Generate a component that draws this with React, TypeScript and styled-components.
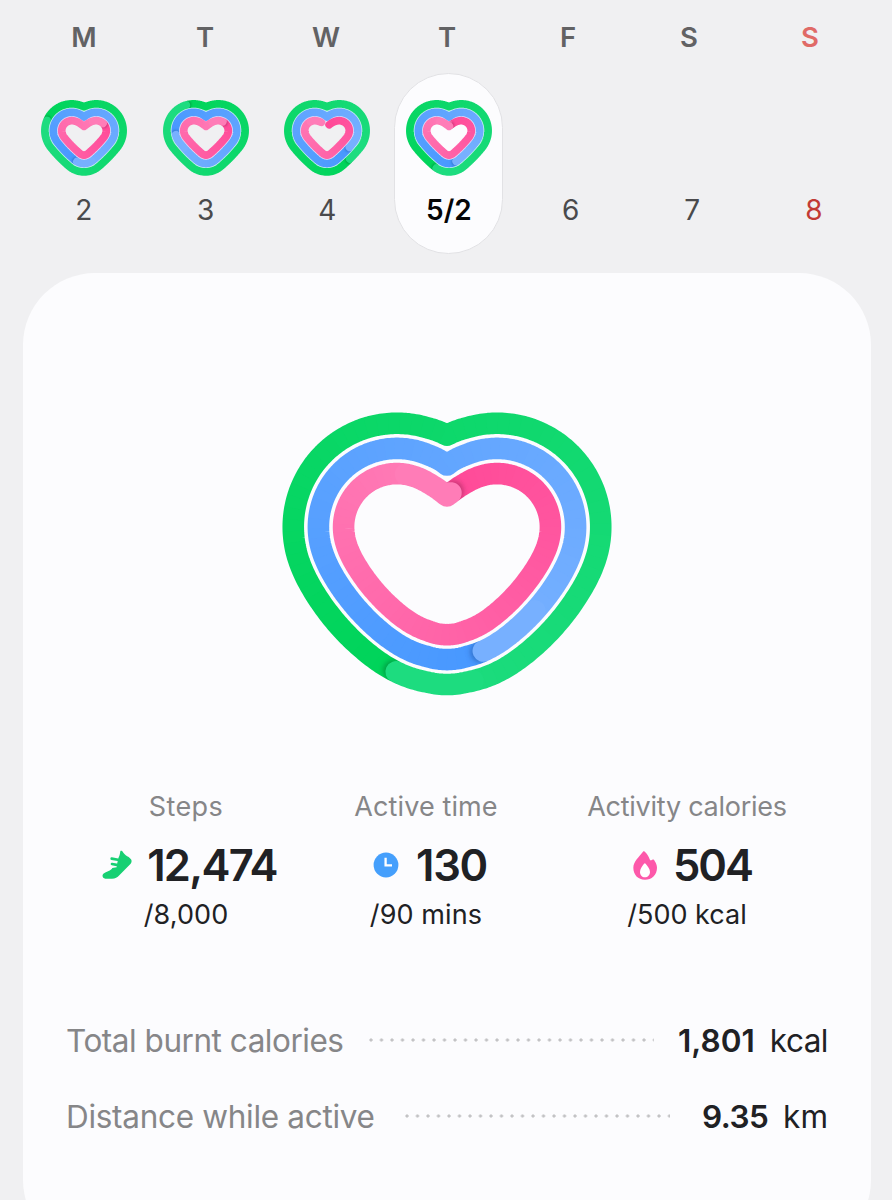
import React, { useId } from "react";
import styled, { createGlobalStyle } from "styled-components";

const GlobalStyle = createGlobalStyle`
  * { box-sizing: border-box; }
  body { margin: 0; background: #f0f0f2; }
`;

/* ---------- heart rings ---------- */

type Pt = [number, number];

interface Shape {
  width: number;
  height: number;
  cx: number;
  cy: number;
  dx: number;
  bottom: number;
  bottomExtra: number;
  sideExtra: number;
  stroke: number;
  notch: number;
  soften: number;
  radii: [number, number, number];
}

const LARGE: Shape = {
  width: 336, height: 290, cx: 168, cy: 118, dx: 50, bottom: 42.5,
  bottomExtra: 10.5, sideExtra: 135, stroke: 21.6, notch: -31, soften: 20,
  radii: [104.5, 79.6, 54.7],
};

const SMALL: Shape = {
  width: 90, height: 80, cx: 45, cy: 32.7, dx: 12.3, bottom: 18.6,
  bottomExtra: -4.2, sideExtra: 110, stroke: 7.7, notch: -4.3, soften: 2,
  radii: [26.85, 18.45, 10.05],
};

function arc(c: Pt, r: number, from: number, to: number, n: number): Pt[] {
  return Array.from({ length: n + 1 }, (_, i) => {
    const a = from + ((to - from) * i) / n;
    return [c[0] + r * Math.cos(a), c[1] + r * Math.sin(a)] as Pt;
  });
}

/* Evenly spaced points along a line. */
function spread(pts: Pt[], n: number): Pt[] {
  const len = [0];
  for (let i = 1; i < pts.length; i++) {
    len.push(len[i - 1] + Math.hypot(pts[i][0] - pts[i - 1][0], pts[i][1] - pts[i - 1][1]));
  }
  const total = len[len.length - 1];
  const out: Pt[] = [];
  let j = 1;
  for (let i = 0; i < n; i++) {
    const t = (total * i) / n;
    while (len[j] < t) j++;
    const f = (t - len[j - 1]) / (len[j] - len[j - 1] || 1);
    out.push([
      pts[j - 1][0] + (pts[j][0] - pts[j - 1][0]) * f,
      pts[j - 1][1] + (pts[j][1] - pts[j - 1][1]) * f,
    ]);
  }
  return out;
}

/* Averages neighbouring points so that curvature changes gradually; the ends stay put. */
function relax(pts: Pt[], distance: number): Pt[] {
  const gap = Math.hypot(pts[1][0] - pts[0][0], pts[1][1] - pts[0][1]);
  const reach = Math.round(distance / gap);
  return pts.map((_, i) => {
    const k = Math.min(reach, i, pts.length - 1 - i);
    let x = 0;
    let y = 0;
    for (let j = i - k; j <= i + k; j++) {
      x += pts[j][0];
      y += pts[j][1];
    }
    return [x / (2 * k + 1), y / (2 * k + 1)] as Pt;
  });
}

/* Centre line of one ring, clockwise from the notch. */
function heartLine(s: Shape, r: number, inner: boolean): Pt[] {
  const lobe: Pt = [s.dx, 0];
  const foot: Pt = [0, s.bottom];
  const R = r + s.sideExtra;
  const rb = r + s.bottomExtra;
  const d = Math.hypot(s.dx, s.bottom);
  const u: Pt = [s.dx / d, -s.bottom / d];
  const dl = R - r;
  const db = R - rb;
  const a = (db * db - dl * dl + d * d) / (2 * d);
  const h = Math.sqrt(db * db - a * a);
  const c: Pt = [foot[0] + u[0] * a + u[1] * h, foot[1] + u[1] * a - u[0] * h];
  const aLobe = Math.atan2(lobe[1] - c[1], lobe[0] - c[0]);
  const aFoot = Math.atan2(foot[1] - c[1], foot[0] - c[0]);

  let right: Pt[] = [];
  if (inner) {
    const p0: Pt = [0, s.notch];
    const p1: Pt = [s.dx * 0.32, s.notch + (-r - s.notch) * 0.52];
    const p2: Pt = [s.dx * 0.58, -r];
    const p3: Pt = [s.dx, -r];
    for (let i = 0; i < 20; i++) {
      const t = i / 20;
      const m = 1 - t;
      right.push([0, 1].map((k) =>
        m * m * m * p0[k] + 3 * m * m * t * p1[k] + 3 * m * t * t * p2[k] + t * t * t * p3[k]
      ) as Pt);
    }
    right = right.concat(arc(lobe, r, -Math.PI / 2, aLobe, 40));
  } else {
    right = arc(lobe, r, -Math.PI + Math.acos(s.dx / r), aLobe, 60);
  }
  right = right.concat(arc(c, R, aLobe, aFoot, 24).slice(1));
  right = right.concat(arc(foot, rb, aFoot, Math.PI / 2, 24).slice(1));
  const last = right[right.length - 1];
  right = relax(spread(right, 200).concat([last]), s.soften);
  const left = right.slice(0, -1).reverse().map(([x, y]) => [-x, y] as Pt);
  return right.concat(left.slice(0, -1));
}

const toPath = (p: Pt[]) => "M" + p.map(([x, y]) => `${x.toFixed(2)} ${y.toFixed(2)}`).join("L");

type Rgb = [number, number, number];
const mix = (a: Rgb, b: Rgb, t: number) =>
  `rgb(${a.map((v, i) => Math.round(v + (b[i] - v) * t)).join(",")})`;

const PALETTE: [Rgb, Rgb][] = [
  [[0, 212, 90], [30, 220, 128]],
  [[72, 152, 255], [120, 177, 255]],
  [[255, 74, 152], [255, 126, 184]],
];

interface RingProps {
  shape: Shape;
  index: number;
  tip: Pt;
  open?: Pt;
}

function Ring({ shape, index, tip, open }: RingProps) {
  const id = useId();
  const N = 240;
  const line = heartLine(shape, shape.radii[index], index === 2);
  const pts = spread(line.concat([line[0]]), N);
  const nearest = (q: Pt) =>
    pts.reduce((best, p, i) =>
      Math.hypot(p[0] - q[0], p[1] - q[1]) < Math.hypot(pts[best][0] - q[0], pts[best][1] - q[1]) ? i : best, 0);
  const end = nearest(tip);
  const start = open ? nearest(open) : end;
  const count = open ? (end - start + N) % N : N;
  const run = Array.from({ length: count + 1 }, (_, i) => pts[(start + i) % N]);
  const [dark, light] = PALETTE[index];
  const w = shape.stroke;
  const step = 3;
  const pieces: React.ReactNode[] = [];
  for (let i = 0; i < count; i += step) {
    pieces.push(
      <path key={i} d={toPath(run.slice(i, Math.min(i + step * 2, count) + 1))}
        stroke={mix(dark, light, i / count)} strokeWidth={w + 3} />
    );
  }
  const [ex, ey] = pts[end];
  const ahead = pts[(end + 2) % N];
  const k = w / 21.6;
  const dir = Math.hypot(ahead[0] - ex, ahead[1] - ey);
  const sx = ex + ((ahead[0] - ex) / dir) * 3 * k;
  const sy = ey + ((ahead[1] - ey) / dir) * 3 * k;
  return (
    <g fill="none" strokeLinejoin="round">
      <defs>
        <mask id={`${id}m`} maskUnits="userSpaceOnUse" x={-180} y={-130} width={360} height={320}>
          <path d={toPath(open ? run : line) + (open ? "" : "Z")} stroke="#fff" strokeWidth={w}
            fill="none" strokeLinejoin="round" strokeLinecap="round" />
        </mask>
        <filter id={`${id}b`} x="-50%" y="-50%" width="200%" height="200%">
          <feGaussianBlur stdDeviation={2.6 * k} />
        </filter>
      </defs>
      <g mask={`url(#${id}m)`}>
        {open && <circle cx={run[0][0]} cy={run[0][1]} r={w / 2 + 1} fill={mix(dark, light, 0)} />}
        {pieces}
        {!open && <circle cx={sx} cy={sy} r={w / 2 - 0.5 * k} fill={["#006b2d", "#1c4f9c", "#8f1c50"][index]}
          opacity={0.5} filter={`url(#${id}b)`} />}
        <path d={toPath(run.slice(-22))} stroke={mix(dark, light, 0.97)} strokeWidth={w} strokeLinecap="round" />
      </g>
    </g>
  );
}

const HeartSvg = styled.svg`
  display: block;
  flex: none;
`;

interface HeartProps {
  shape: Shape;
  tips: [Pt, Pt, Pt];
  open?: Pt;
}

function Heart({ shape, tips, open }: HeartProps) {
  return (
    <HeartSvg width={shape.width} height={shape.height}
      viewBox={`${-shape.cx} ${-shape.cy} ${shape.width} ${shape.height}`}>
      {shape === SMALL && [22.65, 14.25].map((r, i) => (
        <path key={r} d={toPath(heartLine(shape, r, false)) + "Z"} fill="none"
          stroke={i ? "#e4ddfa" : "#c9f3f0"} strokeWidth={1.2} />
      ))}
      {tips.map((t, i) => (
        <Ring key={i} shape={shape} index={i} tip={t} open={i === 2 ? open : undefined} />
      ))}
    </HeartSvg>
  );
}

/* ---------- week strip ---------- */

const Screen = styled.main`
  width: 892px;
  height: 1200px;
  overflow: hidden;
  background: #f0f0f2;
  color: #202124;
  font-family: Inter, "Liberation Sans", sans-serif;
`;

const Weekdays = styled.div`
  display: grid;
  grid-template-columns: repeat(7, 121px);
  padding: 19px 0 0 23.5px;
  height: 73px;
`;

const Weekday = styled.span<{ $sunday?: boolean }>`
  text-align: center;
  font-size: 27.5px;
  line-height: 36px;
  font-weight: 600;
  color: ${(p) => (p.$sunday ? "#e06a67" : "#626264")};
`;

const Days = styled.div`
  display: grid;
  grid-template-columns: repeat(7, 121.7px);
  padding-left: 23px;
  height: 200px;
  justify-items: center;
`;

const Day = styled.div<{ $selected?: boolean }>`
  display: flex;
  flex-direction: column;
  align-items: center;
  width: 109px;
  height: 181px;
  padding-top: 24px;
  border-radius: 55px;
  border: 1px solid ${(p) => (p.$selected ? "#e2e2e5" : "transparent")};
  background: ${(p) => (p.$selected ? "#fcfcfe" : "transparent")};
`;

const HeartSlot = styled.div`
  height: 94px;
`;

const DayNumber = styled.span<{ $selected?: boolean; $sunday?: boolean }>`
  font-size: 28px;
  line-height: 36px;
  font-weight: ${(p) => (p.$selected ? 600 : 400)};
  color: ${(p) => (p.$selected ? "#050506" : p.$sunday ? "#c23a35" : "#4a4a4c")};
`;

/* ---------- activity card ---------- */

const Card = styled.section`
  display: flex;
  flex-direction: column;
  width: 848px;
  height: 979px;
  margin-left: 23px;
  padding: 136px 43px 0;
  border-radius: 72px;
  background: #fcfcfe;
`;

const HeartArea = styled.div`
  display: flex;
  justify-content: center;
  height: 380px;
`;

const Stats = styled.div`
  display: grid;
  grid-template-columns: 240px 240px 282px;
  height: 214px;
`;

const Stat = styled.div`
  display: flex;
  flex-direction: column;
  align-items: center;
`;

const StatLabel = styled.span<{ $track: number }>`
  font-size: 27px;
  line-height: 36px;
  letter-spacing: ${(p) => p.$track}px;
  color: #868688;
`;

const StatValue = styled.div<{ $shift: number; $gap: number }>`
  display: flex;
  align-items: center;
  gap: ${(p) => p.$gap}px;
  height: 56px;
  margin: 12px 0 4px;
  padding-left: ${(p) => p.$shift}px;
`;

const StatNumber = styled.span<{ $track: number }>`
  font-size: 43.5px;
  line-height: 56px;
  font-weight: 600;
  letter-spacing: ${(p) => p.$track}px;
`;

const StatGoal = styled.span<{ $track: number }>`
  font-size: 27px;
  line-height: 36px;
  letter-spacing: ${(p) => p.$track}px;
`;

const TotalRow = styled.div`
  display: flex;
  align-items: center;
  height: 76px;
  font-size: 31.5px;
  line-height: 40px;
`;

const TotalLabel = styled.span<{ $track: number }>`
  letter-spacing: ${(p) => p.$track}px;
  color: #868688;
  white-space: nowrap;
`;

const Dots = styled.span<{ $left: number; $right: number }>`
  flex: 1;
  height: 4px;
  margin: 0 ${(p) => p.$right}px 3px ${(p) => p.$left}px;
  background: radial-gradient(circle at 2px 2px, #c2c2c4 1.2px, transparent 2px) 0 0 / 10.5px 4px repeat-x;
`;

const TotalValue = styled.span<{ $track: number }>`
  font-weight: 600;
  letter-spacing: ${(p) => p.$track}px;
`;

const TotalUnit = styled.span<{ $track: number; $gap: number }>`
  margin-left: ${(p) => p.$gap}px;
  letter-spacing: ${(p) => p.$track}px;
`;

const Icon = styled.svg`
  display: block;
  flex: none;
`;

const Shoe = () => (
  <Icon width="30" height="30" viewBox="12 14 90 90">
    <path fill="#17d073" d="M67 18C69 15 73 17 76 22C80 28 86 31 92 35L99 42C102 46 101 51 98 55L64 90C58 97 52 100 42 100H22C14 100 11 91 16 85C23 79 34 79 41 71L43 68L56 66L58 52L62 36C65 32 66 23 67 18Z" />
    <path d="M41 40L64 44M42 56L60 59.5" stroke="#17d073" strokeWidth="8" strokeLinecap="round" />
  </Icon>
);

const Clock = () => (
  <Icon width="26" height="26" viewBox="0 0 26 26">
    <circle cx="13" cy="13" r="12.4" fill="#459ffc" />
    <path d="M12.6 5.8V13.3H19" fill="none" stroke="#fff" strokeWidth="2.3" />
  </Icon>
);

const Flame = () => (
  <Icon width="24" height="29" viewBox="15 16 72 87">
    <path fill="#fd58aa" d="M45 18C47 16 50 17 52 20C58 26 62 33 65 41C66 44 68 45 70 44L73 42C76 41 78 42 80 46C84 52 87 59 87 66C87 88 71 102 51 102C30 102 16 87 16 66C16 47 32 35 45 18Z" />
    <path fill="#fff" d="M48 54C50 52 51 52 53 54C59 62 66 69 66 79C66 88 59 95 51 95C42 95 36 88 36 79C36 69 42 62 48 54Z" />
  </Icon>
);

const LETTERS = ["M", "T", "W", "T", "F", "S", "S"];

const DAYS: { label: string; tips?: [Pt, Pt, Pt]; open?: Pt }[] = [
  { label: "2", tips: [[-37, -10], [-7, 30], [19, -7]] },
  { label: "3", tips: [[-20, -26], [-30, 4], [17, -9]] },
  { label: "4", tips: [[22, 28], [23, 17], [-6, -8]], open: [2.5, -5] },
  { label: "5/2", tips: [[-12, 36], [7, 30], [1, -4]] },
  { label: "6" },
  { label: "7" },
  { label: "8" },
];

export default function App() {
  return (
    <Screen>
      <GlobalStyle />
      <Weekdays>
        {LETTERS.map((l, i) => <Weekday key={i} $sunday={i === 6}>{l}</Weekday>)}
      </Weekdays>
      <Days>
        {DAYS.map((d, i) => (
          <Day key={d.label} $selected={i === 3}>
            <HeartSlot>{d.tips && <Heart shape={SMALL} tips={d.tips} open={d.open} />}</HeartSlot>
            <DayNumber $selected={i === 3} $sunday={i === 6}>{d.label}</DayNumber>
          </Day>
        ))}
      </Days>
      <Card>
        <HeartArea>
          <Heart shape={LARGE} tips={[[-52, 145], [38, 124], [4.5, -33]]} />
        </HeartArea>
        <Stats>
          <Stat>
            <StatLabel $track={0.4}>Steps</StatLabel>
            <StatValue $shift={7} $gap={15}><Shoe /><StatNumber $track={-1.7}>12,474</StatNumber></StatValue>
            <StatGoal $track={0.1}>/8,000</StatGoal>
          </Stat>
          <Stat>
            <StatLabel $track={0.1}>Active time</StatLabel>
            <StatValue $shift={8} $gap={17}><Clock /><StatNumber $track={-1.3}>130</StatNumber></StatValue>
            <StatGoal $track={0.1}>/90 mins</StatGoal>
          </Stat>
          <Stat>
            <StatLabel $track={-0.25}>Activity calories</StatLabel>
            <StatValue $shift={11} $gap={16}><Flame /><StatNumber $track={-2}>504</StatNumber></StatValue>
            <StatGoal $track={0}>/500 kcal</StatGoal>
          </Stat>
        </Stats>
        <TotalRow>
          <TotalLabel $track={-0.47}>Total burnt calories</TotalLabel>
          <Dots $left={25.5} $right={24} />
          <TotalValue $track={0}>1,801</TotalValue>
          <TotalUnit $track={-0.5} $gap={15}>kcal</TotalUnit>
        </TotalRow>
        <TotalRow>
          <TotalLabel $track={-0.3}>Distance while active</TotalLabel>
          <Dots $left={30} $right={32} />
          <TotalValue $track={-0.6}>9.35</TotalValue>
          <TotalUnit $track={0} $gap={15}>km</TotalUnit>
        </TotalRow>
      </Card>
    </Screen>
  );
}
